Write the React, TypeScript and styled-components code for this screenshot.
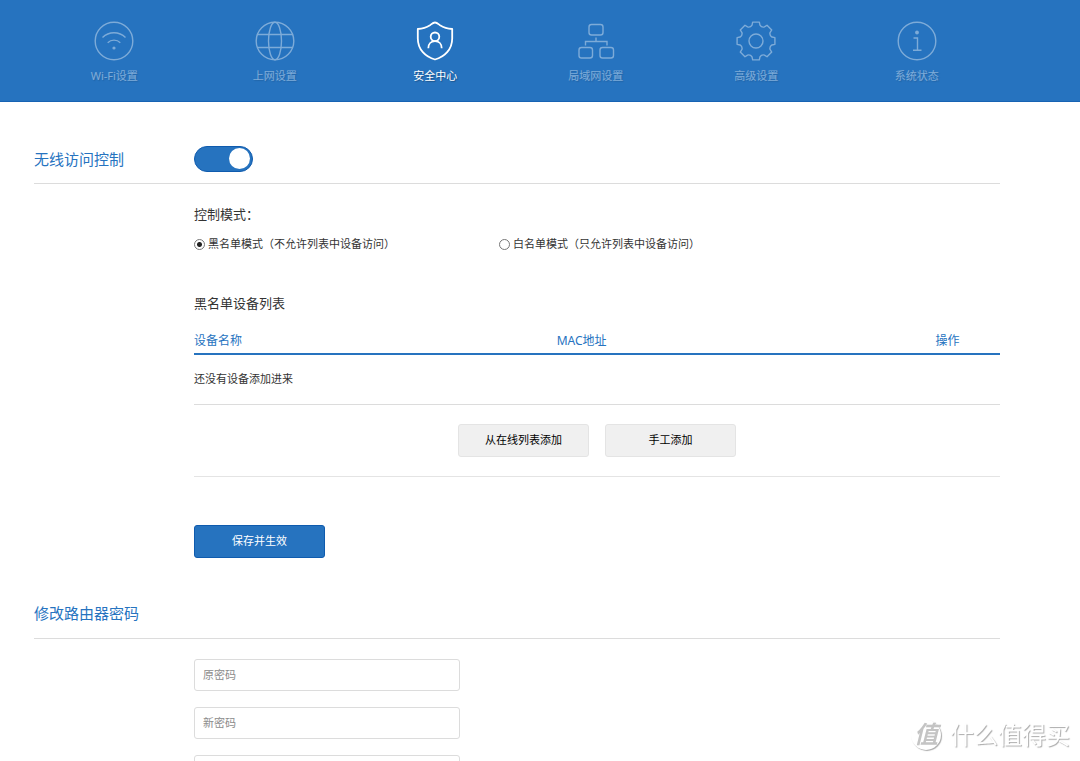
import React, { useState } from "react";
import styled, { createGlobalStyle } from "styled-components";

const blue = "#2673bf";
const line = "#dcdcdc";

const GlobalStyle = createGlobalStyle`
  *, *::before, *::after { box-sizing: border-box; }
  body {
    margin: 0;
    background: #fff;
    color: #333;
    font: 11px/16px "Noto Sans", "Noto Sans CJK SC", sans-serif;
  }
  button, input { font: inherit; }
`;

const Header = styled.header`
  background: ${blue};
  border-bottom: 1px solid #1763b3;
`;

const Nav = styled.nav`
  display: grid;
  grid-template-columns: repeat(6, 1fr);
  padding: 21px 83px 17px 34px;
`;

const NavItem = styled.a<{ $active?: boolean }>`
  display: flex;
  flex-direction: column;
  align-items: center;
  gap: 7px;
  color: #fff;
  text-decoration: none;
  text-shadow: 1px 1px 1px rgba(0, 0, 0, 0.3);
  opacity: ${(p) => (p.$active ? 1 : 0.4)};
`;

const NavIcon = styled.svg`
  width: 40px;
  height: 40px;
  fill: none;
  stroke: currentColor;
  stroke-width: 1.4;
`;

const Main = styled.main`
  padding: 37px 80px 40px 34px;
`;

const SectionHead = styled.div`
  display: grid;
  grid-template-columns: 160px 1fr;
  align-items: center;
  height: 45px;
  padding-bottom: 5px;
  border-bottom: 1px solid ${line};
`;

const SectionTitle = styled.h2`
  margin: 0;
  color: ${blue};
  font-size: 15px;
  font-weight: 400;
  line-height: 24px;
`;

const SectionBody = styled.div`
  padding: 20px 0 36px 160px;
`;

const Toggle = styled.input`
  appearance: none;
  display: flex;
  align-items: center;
  width: 59px;
  height: 26px;
  margin: 0;
  padding: 2px;
  border: 1px solid #0f5bae;
  border-radius: 13px;
  background: #ccc;
  cursor: pointer;
  &::before {
    content: "";
    width: 21px;
    height: 21px;
    border-radius: 50%;
    background: #fff;
  }
  &:checked { background: ${blue}; }
  &:checked::before { margin-left: auto; }
`;

const Modes = styled.fieldset`
  display: grid;
  grid-template-columns: 305px 1fr;
  margin: 0 0 41px;
  padding: 0;
  border: 0;
`;

const GroupTitle = styled.legend`
  margin-bottom: 12px;
  padding: 0;
  font-size: 13px;
  line-height: 20px;
`;

const ModeOption = styled.label`
  display: flex;
  align-items: center;
  gap: 3px;
`;

const Radio = styled.input`
  appearance: none;
  width: 11px;
  height: 11px;
  margin: 0;
  border: 1px solid #777;
  border-radius: 50%;
  &:checked { background: radial-gradient(circle, #222 0 2px, #fff 3px); }
`;

const ListTitle = styled.h3`
  margin: 0 0 16px;
  font-size: 13px;
  font-weight: 400;
  line-height: 20px;
`;

const DeviceTable = styled.table`
  width: 100%;
  table-layout: fixed;
  border-collapse: collapse;
  th {
    height: 25px;
    padding: 0 0 4px;
    border-bottom: 2px solid ${blue};
    color: ${blue};
    font-size: 12px;
    font-weight: 400;
    text-align: left;
    vertical-align: bottom;
  }
  td {
    height: 50px;
    padding: 0;
    border-bottom: 1px solid ${line};
  }
`;

const Column = styled.col<{ $share: number }>`
  width: ${(p) => p.$share}%;
`;

const TableActions = styled.div`
  display: flex;
  justify-content: center;
  gap: 16px;
  padding: 19px 0;
  border-bottom: 1px solid #e4e4e4;
  margin-bottom: 48px;
`;

const Button = styled.button<{ $primary?: boolean }>`
  width: 131px;
  height: 33px;
  padding: 0;
  border: 1px solid ${(p) => (p.$primary ? "#0f5bae" : "#e4e4e4")};
  border-radius: 3px;
  background: ${(p) => (p.$primary ? blue : "#f0f0f0")};
  color: ${(p) => (p.$primary ? "#fff" : "#000")};
  cursor: pointer;
`;

const PasswordForm = styled.form`
  display: flex;
  flex-direction: column;
  gap: 16px;
`;

const Field = styled.input`
  width: 266px;
  height: 32px;
  padding: 0 8px;
  border: 1px solid ${line};
  border-radius: 3px;
  &::placeholder { color: #8c8c8c; opacity: 1; }
`;

const Watermark = styled.div`
  position: fixed;
  right: 10px;
  bottom: 9px;
  display: flex;
  align-items: center;
  gap: 9px;
  color: #fff;
  font-size: 24px;
  line-height: 34px;
  text-shadow: 1px 1px 1px #aaa;
`;

const WatermarkBadge = styled.span`
  width: 30px;
  height: 30px;
  border-radius: 50%;
  box-shadow: 1px 1px 1px #aaa;
  color: #c4c4c4;
  font-weight: 700;
  font-style: italic;
  line-height: 28px;
  text-align: center;
  text-shadow: none;
`;

const point = (radius: number, degrees: number) => {
  const a = (degrees * Math.PI) / 180;
  return `${(20 + radius * Math.sin(a)).toFixed(2)} ${(20 - radius * Math.cos(a)).toFixed(2)}`;
};

/* Eight flared teeth joined by shallow, rounded valleys. */
const gearPath =
  Array.from({ length: 8 }, (_, i) => {
    const a = i * 45;
    return `${i ? "L" : "M"}${point(19.2, a - 10)}L${point(19.2, a + 10)}L${point(16.4, a + 14)}Q${point(14.4, a + 22.5)} ${point(16.4, a + 31)}`;
  }).join("") + "Z";

const navItems = [
  {
    label: "Wi-Fi设置",
    icon: (
      <>
        <circle cx="20" cy="20" r="18.8" />
        <path d="M8.5 16.5c6.4-6.3 16.6-6.3 23 0M13.7 21.7c3.5-3.5 9.1-3.5 12.6 0" />
        <circle cx="20" cy="27" r="1.6" fill="currentColor" stroke="none" />
      </>
    ),
  },
  {
    label: "上网设置",
    icon: (
      <>
        <circle cx="20" cy="20" r="18.8" />
        <ellipse cx="20" cy="20" rx="6.5" ry="18.8" />
        <path d="M2.4 13.5h35.2M2.4 26.5h35.2" />
      </>
    ),
  },
  {
    label: "安全中心",
    active: true,
    icon: (
      <>
        <path
          strokeWidth="1.8"
          strokeLinejoin="round"
          d="M20 1.5c-2 0-3 1.200-5 2.700C11.500 6.500 8.500 7.700 2.800 8v9.500C2.800 28.500 10.500 36 20 38.500 29.500 36 37.200 28.500 37.200 17.500V8C31.500 7.700 28.500 6.500 25 4.200 23 2.700 22 1.500 20 1.500Z"
        />
        <circle cx="20" cy="15.800" r="4.300" strokeWidth="1.8" />
        <path strokeWidth="1.8" d="M13.300 27.200c0-4.300 2.800-7.100 6.700-7.100s6.700 2.800 6.700 7.100" />
      </>
    ),
  },
  {
    label: "局域网设置",
    icon: (
      <>
        <rect x="13" y="3.5" width="14" height="10.5" rx="2.5" />
        <rect x="3" y="26.5" width="13.5" height="10.5" rx="2.5" />
        <rect x="24" y="26.5" width="13.5" height="10.5" rx="2.5" />
        <path d="M20 16.5v4M9.500 24.500v-4h21.500v4" />
      </>
    ),
  },
  {
    label: "高级设置",
    icon: (
      <>
        <path d={gearPath} strokeLinejoin="round" />
        <circle cx="20" cy="20" r="7" />
      </>
    ),
  },
  {
    label: "系统状态",
    icon: (
      <>
        <circle cx="20" cy="20" r="18.8" />
        <circle cx="20" cy="11.5" r="1.9" fill="currentColor" stroke="none" />
        <path d="M16.500 17h4v12.300M16 29.300h8.500" />
      </>
    ),
  },
];

export default function App() {
  const [enabled, setEnabled] = useState(true);
  const [mode, setMode] = useState("black");

  return (
    <>
      <GlobalStyle />
      <Header>
        <Nav>
          {navItems.map((item) => (
            <NavItem key={item.label} href="#" $active={item.active}>
              <NavIcon viewBox="0 0 40 40" aria-hidden="true">{item.icon}</NavIcon>
              {item.label}
            </NavItem>
          ))}
        </Nav>
      </Header>
      <Main>
        <section>
          <SectionHead>
            <SectionTitle id="access-title">无线访问控制</SectionTitle>
            <Toggle
              type="checkbox"
              role="switch"
              aria-labelledby="access-title"
              checked={enabled}
              onChange={(e) => setEnabled(e.target.checked)}
            />
          </SectionHead>
          <SectionBody>
            <Modes>
              <GroupTitle>控制模式：</GroupTitle>
              <ModeOption>
                <Radio type="radio" name="mode" checked={mode === "black"} onChange={() => setMode("black")} />
                黑名单模式（不允许列表中设备访问）
              </ModeOption>
              <ModeOption>
                <Radio type="radio" name="mode" checked={mode === "white"} onChange={() => setMode("white")} />
                白名单模式（只允许列表中设备访问）
              </ModeOption>
            </Modes>
            <ListTitle>黑名单设备列表</ListTitle>
            <DeviceTable>
              <colgroup>
                <Column $share={45} />
                <Column $share={47} />
                <Column $share={8} />
              </colgroup>
              <thead>
                <tr>
                  <th scope="col">设备名称</th>
                  <th scope="col">MAC地址</th>
                  <th scope="col">操作</th>
                </tr>
              </thead>
              <tbody>
                <tr>
                  <td colSpan={3}>还没有设备添加进来</td>
                </tr>
              </tbody>
            </DeviceTable>
            <TableActions>
              <Button type="button">从在线列表添加</Button>
              <Button type="button">手工添加</Button>
            </TableActions>
            <Button type="button" $primary>保存并生效</Button>
          </SectionBody>
        </section>
        <section>
          <SectionHead>
            <SectionTitle>修改路由器密码</SectionTitle>
          </SectionHead>
          <SectionBody>
            <PasswordForm>
              <Field type="password" placeholder="原密码" aria-label="原密码" />
              <Field type="password" placeholder="新密码" aria-label="新密码" />
              <Field type="password" placeholder="确认密码" aria-label="确认密码" />
            </PasswordForm>
          </SectionBody>
        </section>
      </Main>
      <Watermark>
        <WatermarkBadge>值</WatermarkBadge>
        什么值得买
      </Watermark>
    </>
  );
}
